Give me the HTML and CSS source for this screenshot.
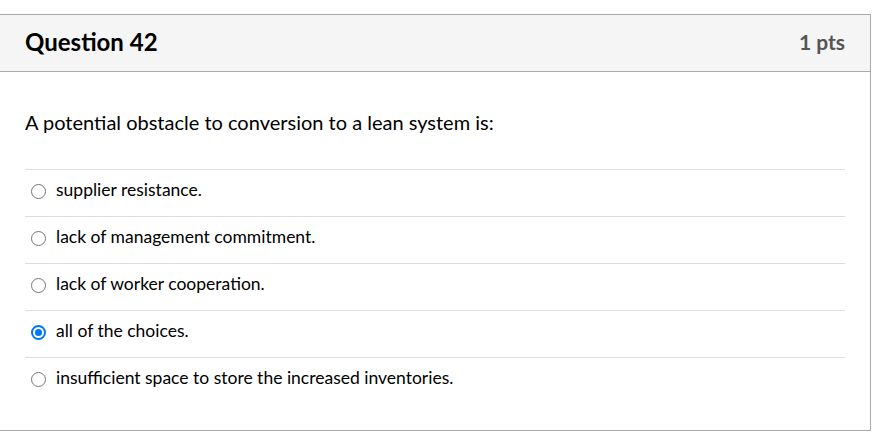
FILE: index.html
```html
<!DOCTYPE html>
<html>
<head>
<meta charset="utf-8">
<link rel="stylesheet" href="styles.css">
</head>
<body>
<div class="question">
  <div class="header">
    <span class="title">Question 42</span>
    <span class="points">1 pts</span>
  </div>
  <div class="content">
    <p class="text">A potential obstacle to conversion to a lean system is:</p>
    <div class="answers">
      <div class="answer"><span class="radio"></span><span>supplier resistance.</span></div>
      <div class="answer"><span class="radio"></span><span>lack of management commitment.</span></div>
      <div class="answer"><span class="radio"></span><span>lack of worker cooperation.</span></div>
      <div class="answer"><span class="radio checked"></span><span>all of the choices.</span></div>
      <div class="answer"><span class="radio"></span><span>insufficient space to store the increased inventories.</span></div>
    </div>
  </div>
</div>
</body>
</html>
```
FILE: styles.css
```css
html, body {
  margin: 0;
  padding: 0;
  background: #fff;
  font-family: Lato, "Liberation Sans", sans-serif;
  color: #2d3b45;
}
.question {
  margin-top: 14px;
  margin-left: -1px;
  width: 870px;
  height: 415px;
  border: 1px solid #aaa;
  box-sizing: content-box;
}
.header {
  box-sizing: content-box;
  height: 52px;
  padding: 0 25px 4px;
  background: #f5f5f5;
  border-bottom: 1px solid #aaa;
  display: flex;
  align-items: center;
  justify-content: space-between;
}
.title {
  font-size: 24px;
  font-weight: 700;
  color: #000;
  margin-top: 1px;
}
.points {
  font-size: 21px;
  font-weight: 700;
  color: #555;
}
.content {
  padding: 0 25px;
}
.text {
  margin: 0;
  padding-top: 38px;
  height: 59px;
  font-size: 20px;
  color: #000;
}
.answers {
  border-top: 1px solid #ddd;
}
.answer {
  display: flex;
  align-items: center;
  height: 39px;
  padding-bottom: 7px;
  border-bottom: 1px solid #ddd;
  font-size: 17.5px;
  color: #000;
}
.answer:last-child {
  border-bottom: none;
}
.radio {
  width: 13px;
  height: 13px;
  border: 1px solid #767676;
  border-radius: 50%;
  margin: 4px 10px 0 6px;
  flex: none;
}
.radio.checked {
  border: 2px solid #0075ff;
  width: 11px;
  height: 11px;
  position: relative;
}
.radio.checked::after {
  content: "";
  position: absolute;
  left: 2px;
  top: 2px;
  width: 7px;
  height: 7px;
  border-radius: 50%;
  background: #0075ff;
}
```
